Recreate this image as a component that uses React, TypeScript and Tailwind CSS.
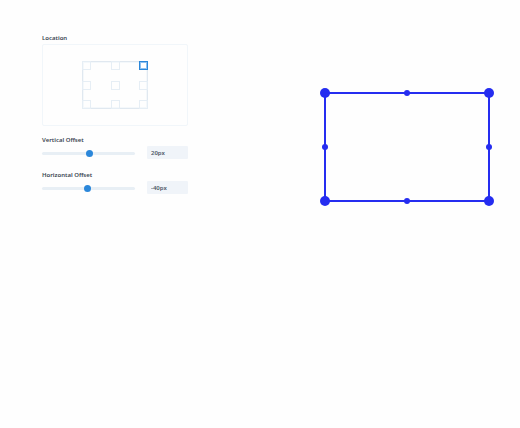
import { useState } from "react";

const LOCATIONS = [
  "Top left", "Top center", "Top right",
  "Center left", "Center", "Center right",
  "Bottom left", "Bottom center", "Bottom right",
];

function LocationPicker() {
  const [selected, setSelected] = useState("Top right");
  return (
    <section>
      <h2 id="location-label" className="text-[6px] leading-[8px] font-semibold text-[#3a4552]">
        Location
      </h2>
      <div className="mt-[2px] flex justify-center rounded-[2px] border border-[#f1f6fa] py-4">
        <div
          role="radiogroup"
          aria-labelledby="location-label"
          className="grid h-12 w-[66px] grid-cols-[repeat(3,9px)] content-between justify-between rounded-[1px] shadow-[inset_0_0_0_1px_#e0e8f0,inset_0_0_0_2px_#f4f8fb]"
        >
          {LOCATIONS.map((name) => (
            <input
              key={name}
              type="radio"
              name="location"
              aria-label={name}
              checked={selected === name}
              onChange={() => setSelected(name)}
              className="block size-[9px] appearance-none border border-[#e6eef5] checked:border-[#2b87da] checked:bg-white checked:inset-ring checked:inset-ring-[#8fc1f0]"
            />
          ))}
        </div>
      </div>
    </section>
  );
}

type OffsetProps = { id: string; label: string; initial: number; limit: number };

function OffsetField({ id, label, initial, limit }: OffsetProps) {
  const [value, setValue] = useState(initial);
  return (
    <section>
      <label htmlFor={id} className="block text-[6px] leading-[8px] font-semibold text-[#3a4552]">
        {label}
      </label>
      <div className="mt-[2px] flex items-center gap-3">
        <input
          id={id}
          type="range"
          min={-limit}
          max={limit}
          value={value}
          onChange={(e) => setValue(Number(e.target.value))}
          className="mt-[2px] h-[3px] min-w-0 flex-1 appearance-none rounded-full bg-[#e8eff5] [&::-webkit-slider-thumb]:size-[7px] [&::-webkit-slider-thumb]:appearance-none [&::-webkit-slider-thumb]:rounded-full [&::-webkit-slider-thumb]:bg-[#2b87da]"
        />
        <input
          type="text"
          aria-label={`${label} value`}
          value={`${value}px`}
          onChange={(e) => setValue(parseInt(e.target.value, 10) || 0)}
          className="h-[13px] w-[41px] rounded-[1px] bg-[#f0f4f9] px-1 text-[6px] leading-[8px] font-semibold text-[#4c5866]"
        />
      </div>
    </section>
  );
}

const HANDLES = [
  { name: "top left", style: "left-0 top-0 size-[10px]" },
  { name: "top", style: "left-1/2 top-0 size-[6px]" },
  { name: "top right", style: "left-full top-0 size-[10px]" },
  { name: "left", style: "left-0 top-1/2 size-[6px]" },
  { name: "right", style: "left-full top-1/2 size-[6px]" },
  { name: "bottom left", style: "left-0 top-full size-[10px]" },
  { name: "bottom", style: "left-1/2 top-full size-[6px]" },
  { name: "bottom right", style: "left-full top-full size-[10px]" },
];

function SelectionFrame() {
  return (
    <div className="relative aspect-[164/108] w-full">
      <div className="absolute -inset-px border-2 border-[#252df0]" />
      {HANDLES.map((handle) => (
        <button
          key={handle.name}
          type="button"
          aria-label={`Resize ${handle.name}`}
          className={`absolute -translate-x-1/2 -translate-y-1/2 rounded-full bg-[#252df0] ${handle.style}`}
        />
      ))}
    </div>
  );
}

export default function App() {
  return (
    <main className="flex min-h-screen items-start bg-[#fefefe] pr-[31px] pl-[42px] font-['Noto_Sans','Open_Sans',sans-serif]">
      <div className="w-[146px] shrink-0 pt-[34px]">
        <LocationPicker />
        <div className="mt-[10px] flex flex-col gap-3">
          <OffsetField id="vertical-offset" label="Vertical Offset" initial={20} limit={840} />
          <OffsetField id="horizontal-offset" label="Horizontal Offset" initial={-40} limit={1200} />
        </div>
      </div>
      <div className="min-w-0 flex-1 pt-[93px] pl-[137px]">
        <SelectionFrame />
      </div>
    </main>
  );
}
